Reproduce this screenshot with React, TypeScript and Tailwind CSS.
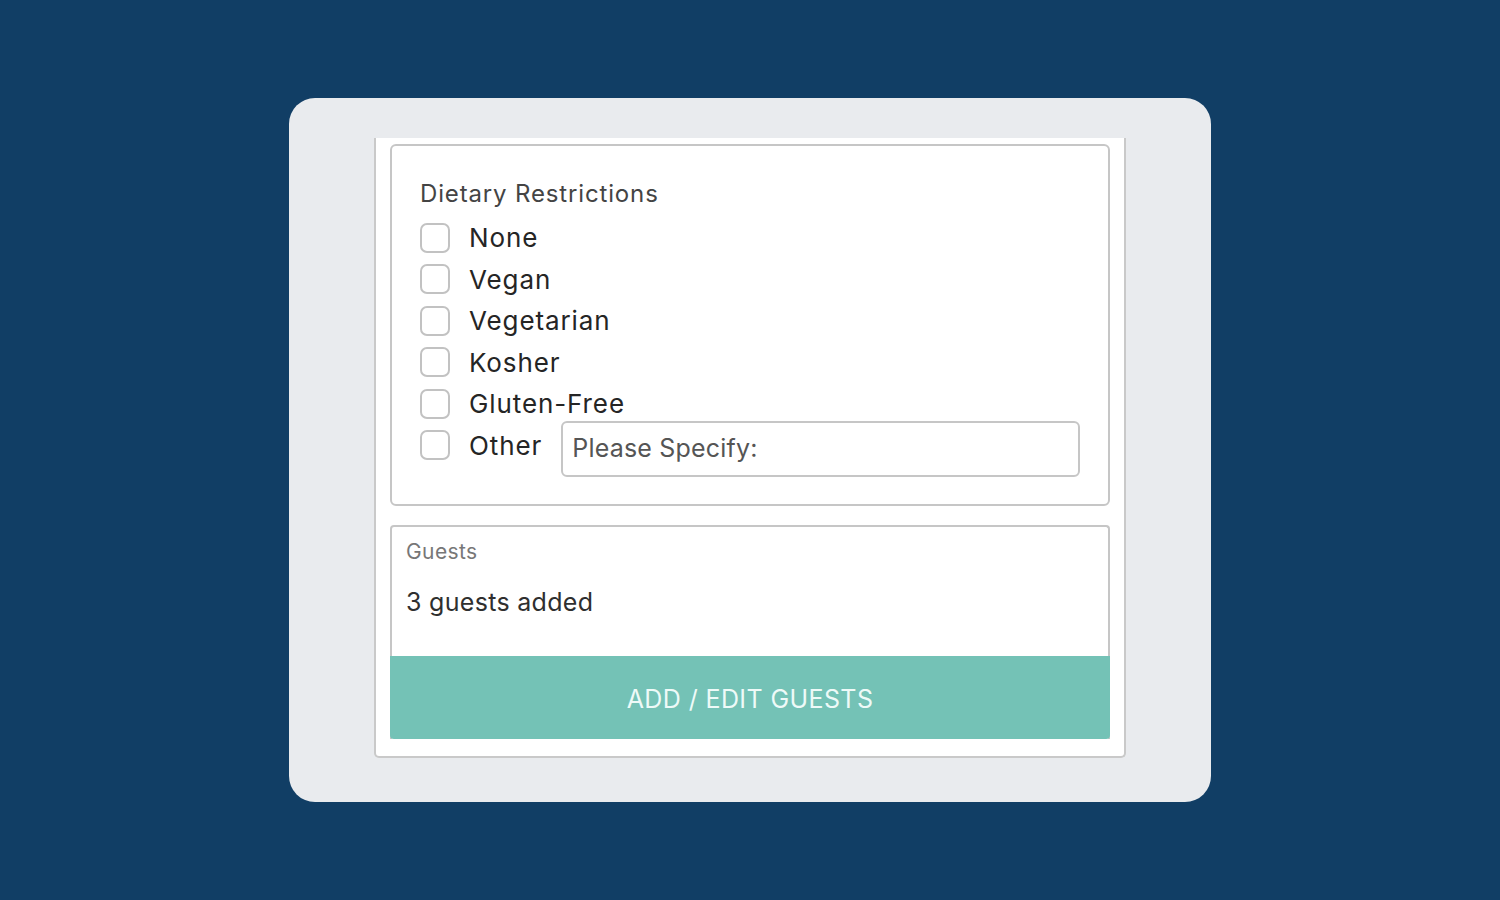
import React from 'react';

const options = ['None', 'Vegan', 'Vegetarian', 'Kosher', 'Gluten-Free'];

const Box: React.FC = () => (
  <span className="block w-[30px] h-[30px] shrink-0 rounded-[7px] border-2 border-[#c2c2c2] bg-white" />
);

const App: React.FC = () => {
  return (
    <div
      className="w-[1500px] h-[900px] bg-[#113e65] flex items-center justify-center"
      style={{ fontFamily: 'Inter, Lato, sans-serif' }}
    >
      <div className="w-[922px] h-[704px] bg-[#e9ebee] rounded-[26px] flex justify-center pt-[40px]">
        <div className="w-[752px] h-[620px] bg-white border-2 border-t-0 border-[#c9c9c9] rounded-b-[5px] px-[14px] pt-[6px]">
          <div className="h-[362px] border-2 border-[#c6c6c6] rounded-[6px] pl-[28px] pr-[28px] pt-[30px]">
            <div className="text-[24px] leading-[36px] tracking-[0.85px] text-[#444]">Dietary Restrictions</div>
            <div className="mt-[5px] flex flex-col">
              {options.map((o) => (
                <label key={o} className="flex items-center h-[41.5px]">
                  <Box />
                  <span className="ml-[19px] text-[26px] tracking-[0.9px] text-[#252525]">{o}</span>
                </label>
              ))}
              <div className="flex items-start">
                <div className="flex items-center h-[41.5px]">
                  <Box />
                  <span className="ml-[19px] text-[26px] tracking-[0.9px] text-[#252525]">Other</span>
                </div>
                <div className="ml-[19px] mt-[-4px] flex-1 h-[56px] border-2 border-[#c6c6c6] rounded-[6px] flex items-center px-[9px] text-[25px] tracking-[0.2px] text-[#555]">
                  Please Specify:
                </div>
              </div>
            </div>
          </div>
          <div className="mt-[19px] h-[214px] border-2 border-b-0 border-[#c6c6c6] rounded-t-[4px] flex flex-col">
            <div className="flex-1 px-[14px] pt-[11px]">
              <div className="text-[21px] leading-[28px] tracking-[0.4px] text-[#777]">Guests</div>
              <div className="mt-[21px] text-[25px] leading-[30px] tracking-[0.3px] text-[#2f2f2f]">3 guests added</div>
            </div>
            <button className="mx-[-2px] h-[83px] pt-[4px] bg-[#74c2b6] text-[#eefaf8] text-[25px] tracking-[0.4px] rounded-b-[4px]">
              ADD / EDIT GUESTS
            </button>
          </div>
        </div>
      </div>
    </div>
  );
};

export default App;
